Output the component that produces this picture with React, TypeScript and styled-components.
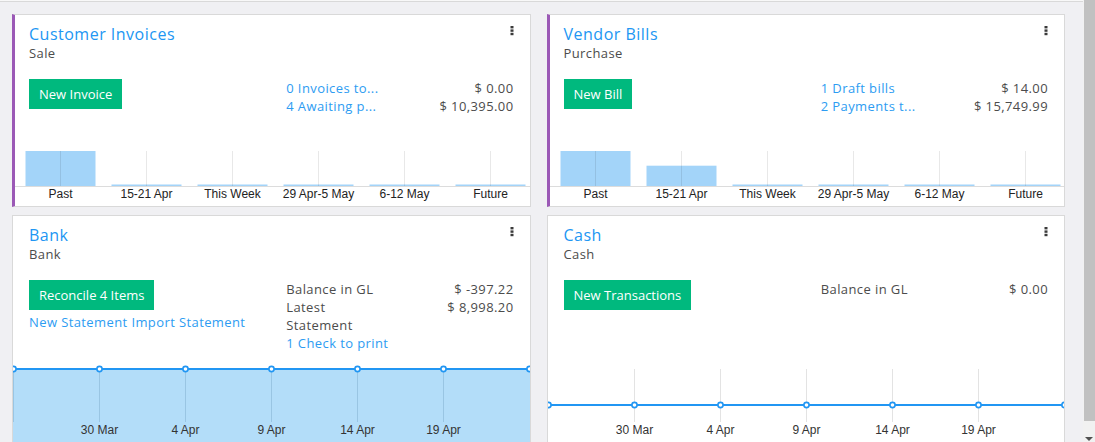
import React from "react";
import styled, { createGlobalStyle } from "styled-components";

const GlobalStyle = createGlobalStyle`
  html, body {
    margin: 0;
    padding: 0;
    background: #f0f0f3;
    overflow: hidden;
  }
  body {
    font-family: "Open Sans", "Noto Sans", sans-serif;
    color: #4c4c4c;
  }
`;

const Screen = styled.div`
  display: flex;
  width: 1095px;
  height: 442px;
  overflow: hidden;
`;

const Main = styled.div`
  flex: 1;
  min-width: 0;
  display: flex;
  flex-direction: column;
`;

const PanelEdge = styled.div`
  flex: none;
  height: 1px;
  background: #f8f8f8;
  border-bottom: 1px solid #d9d9d9;
`;

const Dashboard = styled.div`
  display: grid;
  grid-template-columns: 1fr 1fr;
  gap: 8px 16px;
  padding: 12px 18px 0 12px;
`;

const Scrollbar = styled.div`
  flex: none;
  width: 12px;
  background: #f1f1f1;
  display: flex;
  flex-direction: column;
  align-items: center;
`;

const Thumb = styled.div`
  align-self: stretch;
  height: 421px;
  margin-left: 1px;
  background: #c1c1c1;
`;

const DownArrow = styled.div`
  margin-top: 16px;
  width: 0;
  height: 0;
  border-left: 4px solid transparent;
  border-right: 4px solid transparent;
  border-top: 4px solid #505050;
`;

const Card = styled.div<{ $accent?: boolean; $tall?: boolean }>`
  box-sizing: border-box;
  background: #fff;
  border: 1px solid #d9d9d9;
  border-left: ${(p) => (p.$accent ? "3px solid #9b59b6" : "1px solid #d9d9d9")};
  height: ${(p) => (p.$tall ? "256px" : "193px")};
  display: flex;
  flex-direction: column;
  overflow: hidden;
`;

const CardTop = styled.div<{ $accent?: boolean }>`
  padding: 9px 16px 0 ${(p) => (p.$accent ? "14px" : "16px")};
`;

const Header = styled.div`
  display: flex;
  justify-content: space-between;
  align-items: flex-start;
`;

const Title = styled.div`
  font-size: 16px;
  line-height: 20px;
  letter-spacing: 0.5px;
  color: #2196f3;
`;

const Subtitle = styled.div`
  font-size: 13px;
  line-height: 18px;
  letter-spacing: 0.4px;
  color: #4c4c4c;
`;

const Kebab = styled.svg`
  margin-top: 2px;
  flex: none;
`;

const Body = styled.div`
  margin-top: 17px;
  display: grid;
  grid-template-columns: 1fr 1fr;
  column-gap: 30px;
  font-size: 13px;
  line-height: 18px;
  letter-spacing: 0.4px;
`;

const Actions = styled.div`
  display: flex;
  flex-direction: column;
  align-items: flex-start;
`;

const PrimaryButton = styled.button`
  height: 30px;
  padding: 0 10px;
  border: none;
  border-radius: 0;
  background: #00b97e;
  color: #fff;
  font-family: inherit;
  font-size: 13px;
  letter-spacing: 0;
  cursor: pointer;
`;

const LinkText = styled.a<{ $gap?: number }>`
  color: #2d9cf2;
  text-decoration: none;
  margin-top: ${(p) => p.$gap ?? 0}px;
  cursor: pointer;
`;

const Stats = styled.div`
  display: grid;
  grid-template-columns: 1fr 1fr;
  column-gap: 30px;
  align-content: start;
`;

const StatLabel = styled.div<{ $link?: boolean }>`
  color: ${(p) => (p.$link ? "#2d9cf2" : "#4c4c4c")};
  white-space: ${(p) => (p.$link ? "nowrap" : "normal")};
  overflow: hidden;
`;

const StatValue = styled.div`
  text-align: right;
  color: #4c4c4c;
  white-space: nowrap;
`;

const FullRow = styled.div`
  grid-column: 1 / -1;
`;

const BarSvg = styled.svg`
  display: block;
  width: 100%;
  height: 58px;
  margin-top: auto;
  flex: none;
`;

const LineSvg = styled.svg`
  display: block;
  width: 100%;
  height: 110px;
  margin-top: auto;
  flex: none;
`;

const KebabIcon = () => (
  <Kebab width="4" height="10" viewBox="0 0 4 10">
    <rect x="0.5" y="0" width="3" height="2.4" fill="#3a3a3a" />
    <rect x="0.5" y="3.4" width="3" height="2.4" fill="#3a3a3a" />
    <rect x="0.5" y="6.8" width="3" height="2.4" fill="#3a3a3a" />
  </Kebab>
);

const BAR_LABELS = ["Past", "15-21 Apr", "This Week", "29 Apr-5 May", "6-12 May", "Future"];

const BarChart = ({ values }: { values: number[] }) => {
  const cx = (i: number) => 45.5 + 86 * i;
  return (
    <BarSvg>
      {values.map((v, i) => {
        const h = v > 0 ? v * 35 : 1.5;
        return <rect key={"b" + i} x={cx(i) - 35} y={38 - h} width={70} height={h} fill="#a3d4f9" />;
      })}
      {BAR_LABELS.map((_, i) => (
        <line key={"g" + i} x1={cx(i)} x2={cx(i)} y1={3} y2={38} stroke="rgba(0,0,0,0.09)" strokeWidth={1} />
      ))}
      <line x1={0} x2={600} y1={38.5} y2={38.5} stroke="#dcdcdc" strokeWidth={1} />
      {BAR_LABELS.map((l, i) => (
        <text
          key={"t" + i}
          x={cx(i)}
          y={50}
          textAnchor="middle"
          fontFamily="'Liberation Sans', Arial, sans-serif"
          fontSize={12}
          fill="#222"
        >
          {l}
        </text>
      ))}
    </BarSvg>
  );
};

const LINE_LABELS = ["30 Mar", "4 Apr", "9 Apr", "14 Apr", "19 Apr"];

const LineChart = ({ filled, lineY }: { filled: boolean; lineY: number }) => {
  const xs = [0, 1, 2, 3, 4, 5, 6].map((i) => 0.5 + 86 * i);
  return (
    <LineSvg>
      {filled && <rect x={0} y={lineY} width={600} height={200} fill="#b3ddf9" />}
      {LINE_LABELS.map((_, i) => (
        <line
          key={"g" + i}
          x1={xs[i + 1]}
          x2={xs[i + 1]}
          y1={9}
          y2={62}
          stroke={filled ? "rgba(40,90,130,0.18)" : "#e3e3e3"}
          strokeWidth={1}
        />
      ))}
      {filled && <line x1={xs[0]} x2={xs[0]} y1={lineY} y2={62} stroke="rgba(40,90,130,0.18)" />}
      <line x1={0} x2={xs[6]} y1={lineY} y2={lineY} stroke="#2196f3" strokeWidth={2} />
      {xs.map((x, i) => (
        <circle key={"c" + i} cx={x} cy={lineY} r={2.6} fill="#fff" stroke="#2196f3" strokeWidth={1.6} />
      ))}
      {LINE_LABELS.map((l, i) => (
        <text
          key={"t" + i}
          x={xs[i + 1]}
          y={74}
          textAnchor="middle"
          fontFamily="'Liberation Sans', Arial, sans-serif"
          fontSize={12}
          fill="#333"
        >
          {l}
        </text>
      ))}
    </LineSvg>
  );
};

type Row = { label: React.ReactNode; value?: string; link?: boolean };

const CardHead = ({ title, subtitle }: { title: string; subtitle: string }) => (
  <Header>
    <div>
      <Title>{title}</Title>
      <Subtitle>{subtitle}</Subtitle>
    </div>
    <KebabIcon />
  </Header>
);

const StatList = ({ rows, footer }: { rows: Row[]; footer?: string }) => (
  <Stats>
    {rows.map((r, i) => (
      <React.Fragment key={i}>
        <StatLabel $link={r.link}>{r.label}</StatLabel>
        <StatValue>{r.value}</StatValue>
      </React.Fragment>
    ))}
    {footer && (
      <FullRow>
        <LinkText>{footer}</LinkText>
      </FullRow>
    )}
  </Stats>
);

export default function App() {
  return (
    <>
      <GlobalStyle />
      <Screen>
        <Main>
          <PanelEdge />
          <Dashboard>
            <Card $accent>
              <CardTop $accent>
                <CardHead title="Customer Invoices" subtitle="Sale" />
                <Body>
                  <Actions>
                    <PrimaryButton>New Invoice</PrimaryButton>
                  </Actions>
                  <StatList
                    rows={[
                      { label: "0 Invoices to...", value: "$ 0.00", link: true },
                      { label: "4 Awaiting p...", value: "$ 10,395.00", link: true },
                    ]}
                  />
                </Body>
              </CardTop>
              <BarChart values={[1, 0, 0, 0, 0, 0]} />
            </Card>

            <Card $accent>
              <CardTop $accent>
                <CardHead title="Vendor Bills" subtitle="Purchase" />
                <Body>
                  <Actions>
                    <PrimaryButton>New Bill</PrimaryButton>
                  </Actions>
                  <StatList
                    rows={[
                      { label: "1 Draft bills", value: "$ 14.00", link: true },
                      { label: "2 Payments t...", value: "$ 15,749.99", link: true },
                    ]}
                  />
                </Body>
              </CardTop>
              <BarChart values={[1, 0.58, 0, 0, 0, 0]} />
            </Card>

            <Card $tall>
              <CardTop>
                <CardHead title="Bank" subtitle="Bank" />
                <Body>
                  <Actions>
                    <PrimaryButton>Reconcile 4 Items</PrimaryButton>
                    <LinkText $gap={3}>New Statement Import Statement</LinkText>
                  </Actions>
                  <StatList
                    rows={[
                      { label: "Balance in GL", value: "$ -397.22" },
                      { label: "Latest Statement", value: "$ 8,998.20" },
                    ]}
                    footer="1 Check to print"
                  />
                </Body>
              </CardTop>
              <LineChart filled lineY={9} />
            </Card>

            <Card $tall>
              <CardTop>
                <CardHead title="Cash" subtitle="Cash" />
                <Body>
                  <Actions>
                    <PrimaryButton>New Transactions</PrimaryButton>
                  </Actions>
                  <StatList rows={[{ label: "Balance in GL", value: "$ 0.00" }]} />
                </Body>
              </CardTop>
              <LineChart filled={false} lineY={45} />
            </Card>
          </Dashboard>
        </Main>
        <Scrollbar>
          <Thumb />
          <DownArrow />
        </Scrollbar>
      </Screen>
    </>
  );
}
